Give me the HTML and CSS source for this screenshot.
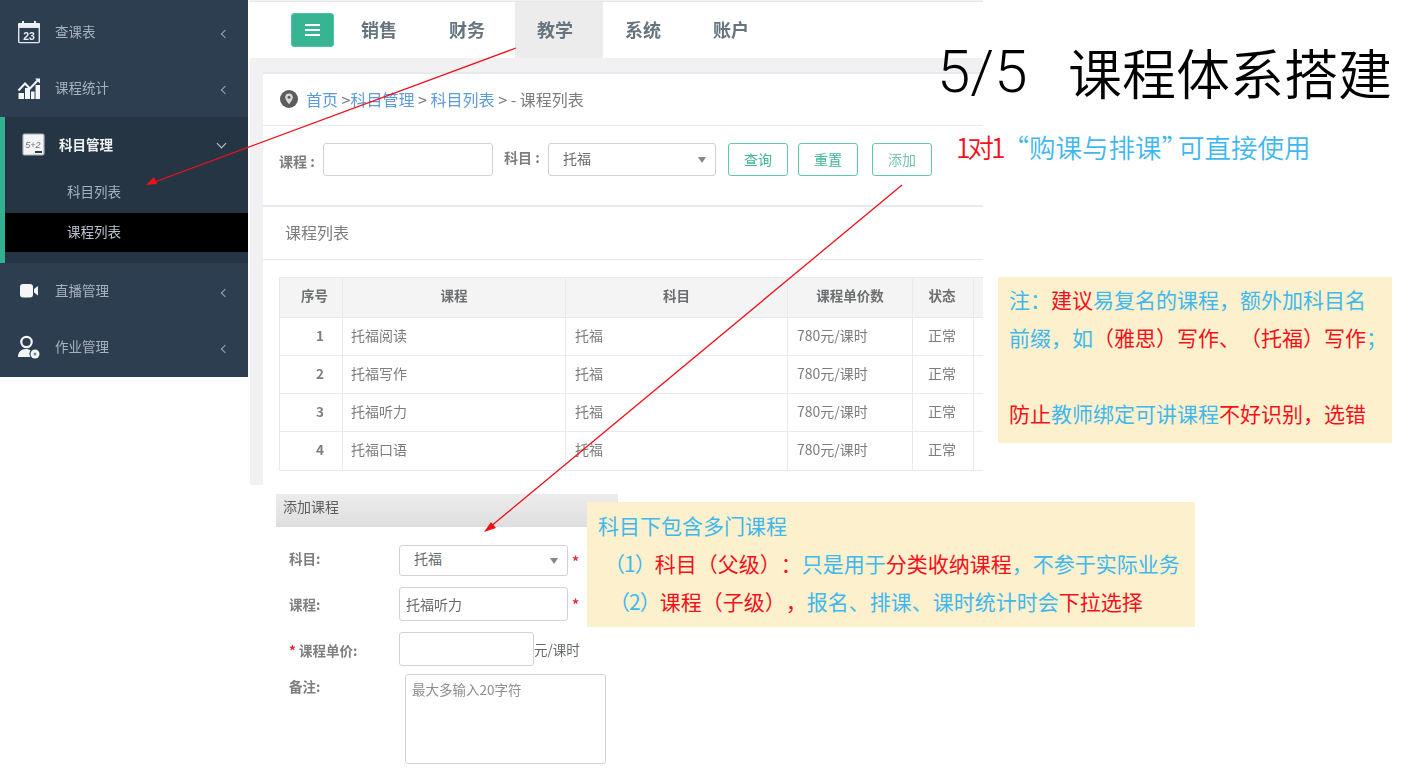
FILE: index.html
```html
<!DOCTYPE html>
<html lang="zh-CN">
<head>
<meta charset="utf-8">
<title>课程体系搭建</title>
<link rel="stylesheet" href="styles.css">
</head>
<body>
<div class="slide">

  <aside class="sidebar shot">
    <div class="side-item">
      <svg class="side-icon" width="24" height="24" viewBox="0 0 24 24"><path d="M2 3h3V1h2v2h10V1h2v2h3a1 1 0 0 1 1 1v4H1V4a1 1 0 0 1 1-1z" fill="#eef1f4"/><rect x="1.7" y="7" width="20.6" height="15.6" rx="1" fill="none" stroke="#e4e8ec" stroke-width="1.4"/><text x="12" y="19.5" text-anchor="middle" class="svg-num">23</text></svg>
      <span class="side-label">查课表</span><span class="chev"></span>
    </div>
    <div class="side-item">
      <svg class="side-icon" width="24" height="24" viewBox="0 0 24 24"><path d="M1.500 23v-6H7v6zM8 23V12h5v11zM14 23v-7.500h3.500V23zM18.500 23V9H23v14z" fill="#f4f6f8"/><path d="M1.500 14.500L8 7.500l5 5 7.500-8" fill="none" stroke="#f4f6f8" stroke-width="2"/><path d="M18 2.500h5v5z" fill="#f4f6f8"/></svg>
      <span class="side-label">课程统计</span><span class="chev"></span>
    </div>
    <div class="side-group">
      <div class="side-head">
        <svg class="board-icon" width="23" height="23" viewBox="0 0 23 23"><rect x="1" y="1" width="21" height="21" rx="1.500" fill="#f2f4f5" stroke="#aab2ba" stroke-width="1.200"/><text x="11" y="14.500" text-anchor="middle" class="svg-board">5+2</text><rect x="13" y="18" width="7" height="2" fill="#2c3a47"/></svg>
        <span class="side-label strong">科目管理</span><span class="chev-down"></span>
      </div>
      <div class="side-sub">科目列表</div>
      <div class="side-sub current">课程列表</div>
    </div>
    <div class="side-item">
      <svg class="side-icon" width="24" height="24" viewBox="0 0 24 24"><rect x="3" y="5" width="13" height="13.500" rx="3" fill="#f4f6f8"/><path d="M17 10l4-3v9.500l-4-3z" fill="#f4f6f8"/></svg>
      <span class="side-label">直播管理</span><span class="chev"></span>
    </div>
    <div class="side-item">
      <svg class="side-icon" width="24" height="24" viewBox="0 0 24 24"><circle cx="9.500" cy="7" r="5.200" fill="none" stroke="#f4f6f8" stroke-width="2.200"/><path d="M1 22c0-5 3-8 8-8 2 0 3.500.5 4.500 1.500-1.500 2-1.500 4.500 0 6.500z" fill="#f4f6f8"/><circle cx="18" cy="19" r="4.500" fill="#f4f6f8"/><circle cx="18" cy="19" r="1.500" fill="#7c8894"/></svg>
      <span class="side-label">作业管理</span><span class="chev"></span>
    </div>
  </aside>

  <section class="main shot">
    <nav class="topbar">
      <button class="menu-btn" type="button"><span></span><span></span><span></span></button>
      <a class="tab">销售</a><a class="tab">财务</a><a class="tab active">教学</a><a class="tab">系统</a><a class="tab">账户</a>
    </nav>
    <div class="panel">
      <div class="crumbs">
        <svg class="pin" width="18" height="18" viewBox="0 0 18 18"><circle cx="9" cy="9" r="9" fill="#5c5c5c"/><path d="M9 3.500a3.800 3.800 0 0 0-3.800 3.800c0 2.700 3.800 7 3.800 7s3.800-4.300 3.800-7A3.800 3.800 0 0 0 9 3.500z" fill="#d9d9d9"/><circle cx="9" cy="7.300" r="1.500" fill="#5c5c5c"/></svg>
        <span class="crumb-text"><a>首页</a> &gt;<a>科目管理</a> &gt; <a>科目列表</a> &gt; - 课程列表</span>
      </div>
      <div class="filter">
        <label class="f-label low">课程 :</label>
        <input class="field f-course" type="text">
        <label class="f-label high">科目 :</label>
        <div class="field select f-subject"><span>托福</span><i class="caret"></i></div>
        <button class="btn" type="button">查询</button>
        <button class="btn" type="button">重置</button>
        <button class="btn add" type="button">添加</button>
      </div>
      <h2 class="list-title">课程列表</h2>
      <div class="table-wrap">
        <table class="grid">
          <colgroup><col class="c1"><col class="c2"><col class="c3"><col class="c4"><col class="c5"><col class="c6"></colgroup>
          <thead><tr><th class="idx-h">序号</th><th>课程</th><th>科目</th><th>课程单价数</th><th class="stat-h">状态</th><th></th></tr></thead>
          <tbody>
            <tr><td class="idx">1</td><td>托福阅读</td><td>托福</td><td>780元/课时</td><td class="ctr">正常</td><td></td></tr>
            <tr><td class="idx">2</td><td>托福写作</td><td>托福</td><td>780元/课时</td><td class="ctr">正常</td><td></td></tr>
            <tr><td class="idx">3</td><td>托福听力</td><td>托福</td><td>780元/课时</td><td class="ctr">正常</td><td></td></tr>
            <tr class="last"><td class="idx">4</td><td>托福口语</td><td>托福</td><td>780元/课时</td><td class="ctr">正常</td><td></td></tr>
          </tbody>
        </table>
      </div>
    </div>
  </section>

  <section class="form shot">
    <div class="form-head">添加课程</div>
    <div class="form-row r1">
      <label class="form-label">科目:</label>
      <div class="field select f-wide"><span>托福</span><i class="caret"></i></div>
      <span class="req">*</span>
    </div>
    <div class="form-row r2">
      <label class="form-label">课程:</label>
      <input class="field f-wide text-in" type="text" value="托福听力">
      <span class="req">*</span>
    </div>
    <div class="form-row r3">
      <label class="form-label"><span class="req-l">*</span> 课程单价:</label>
      <input class="field f-price" type="text">
      <span class="unit">元/课时</span>
    </div>
    <div class="form-row r4">
      <label class="form-label">备注:</label>
      <textarea class="field memo" placeholder="最大多输入20字符"></textarea>
    </div>
  </section>

  <h1 class="title"><span class="title-num">5/5</span><span class="title-cn">课程体系搭建</span></h1>
  <p class="subtitle"><span class="red one">1对1</span> “购课与排课<span class="close-q">”</span>可直接使用</p>

  <div class="note note-a">
    <p>注：<span class="red">建议</span>易复名的课程，额外加科目名</p>
    <p>前缀，如<span class="red">（雅思）写作、（托福）写作</span>；</p>
    <p>&nbsp;</p>
    <p><span class="red">防止</span>教师绑定可讲课程<span class="red">不好识别，选错</span></p>
  </div>

  <div class="note note-b">
    <p>科目下包含多门课程</p>
    <p class="ind-1"><span class="num">（1）</span><span class="red">科目（父级）：</span>只是用于<span class="red">分类收纳课程</span>，不参于实际业务</p>
    <p class="ind-2"><span class="num">（2）</span><span class="red">课程（子级），</span>报名、排课、课时统计时会<span class="red">下拉选择</span></p>
  </div>

  <svg class="arrows" width="1412" height="779" viewBox="0 0 1412 779">
    <path d="M516 48L152 183" stroke="#f0101a" stroke-width="1.300" fill="none"/>
    <path d="M146 185L154 177L157 184Z" fill="#f0101a"/>
    <path d="M902 185L490 527" stroke="#f0101a" stroke-width="1.300" fill="none"/>
    <path d="M484 532L491 522L496 528Z" fill="#f0101a"/>
  </svg>
</div>
</body>
</html>
```

FILE: styles.css
```css
* { box-sizing: border-box; }
html, body { margin: 0; padding: 0; background: #fff; }
body { font-family: "Noto Sans CJK SC", "Liberation Sans", sans-serif; color: #676a6c; }
p, h1, h2 { margin: 0; font-weight: normal; }
a { color: inherit; }

.slide { position: relative; width: 1412px; height: 779px; overflow: hidden; background: #fff; }
.shot { filter: blur(0.35px); }

/* sidebar */
.sidebar { position: absolute; left: 0; top: 0; width: 248px; height: 377px; padding-top: 4px; background: #2c3e50; color: #a7b1c2; font-size: 13.5px; }
.side-item { position: relative; display: flex; align-items: center; height: 56px; padding-left: 17px; }
.side-icon { flex: none; margin-right: 14px; }
.side-label { flex: 1; margin-bottom: 2px; }
.side-label.strong { color: #eef1f4; font-weight: 700; }
.chev { width: 6px; height: 6px; margin: 3px 20px 0 0; border-left: 1.5px solid #9aa8b8; border-bottom: 1.5px solid #9aa8b8; transform: rotate(45deg); }
.chev-down { width: 7px; height: 7px; margin: 0 23px 3px 0; border-right: 1.5px solid #c5ccd4; border-bottom: 1.5px solid #c5ccd4; transform: rotate(45deg); }
.side-group { height: 146px; padding-bottom: 11px; margin-top: 1px; background: #263543; border-left: 5px solid #33b08f; }
.side-head { display: flex; align-items: center; height: 55px; padding-left: 17px; }
.board-icon { flex: none; margin-right: 14px; }
.side-sub { display: flex; align-items: center; height: 41px; padding: 0 0 3px 62px; }
.side-sub.current { height: 39px; background: #000; color: #b8c2d2; }
.svg-num { font: bold 10.5px "Liberation Sans", sans-serif; fill: #e9edf0; }
.svg-board { font: italic 9px "Liberation Sans", sans-serif; fill: #6b6f72; }

/* main screenshot */
.main { position: absolute; left: 250px; top: 0; width: 733px; height: 485px; padding-top: 1px; background: #f1f1f3; overflow: hidden; }
.topbar { display: flex; align-items: stretch; height: 57px; padding-left: 41px; background: #fff; border-top: 1px solid #e7e7e7; }
.menu-btn { display: flex; flex-direction: column; align-items: center; justify-content: center; gap: 3px; align-self: center; width: 43px; height: 34px; margin: 0 5px 0 0; padding: 0; border: 1px solid #52c4a6; border-radius: 3px; background: #37b492; }
.menu-btn span { width: 15px; height: 2px; background: #fff; }
.tab { width: 88px; display: flex; align-items: center; padding: 0 0 3px 22px; color: #66747f; font-size: 18px; font-weight: 700; }
.tab.active { background: #ececec; }

.panel { width: 720px; height: 414px; margin: 14px 0 0 13px; background: #fff; border-top: 2px solid #e7eaec; }
.crumbs { display: flex; align-items: center; gap: 8px; height: 52px; padding: 0 0 2px 17px; border-bottom: 1px solid #e7eaec; font-size: 16px; color: #7d7d7d; }
.crumbs .pin { flex: none; }
.crumb-text a { color: #5b9bd9; }
.filter { display: flex; align-items: center; height: 81px; padding: 0 0 12px 16px; border-bottom: 2px solid #e7eaec; font-size: 14px; }
.f-label { font-weight: 700; color: #7c7e80; white-space: nowrap; }
.f-label.low { position: relative; top: 1px; width: 44px; }
.f-label.high { position: relative; top: -3px; width: 44px; }
.field { display: block; border: 1px solid #d2d2d2; border-radius: 3px; background: #fff; font: inherit; color: #676a6c; outline: none; }
.f-course { width: 170px; height: 33px; margin-right: 11px; }
.select { position: relative; display: flex; align-items: center; padding-left: 14px; }
.caret { position: absolute; right: 9px; top: 50%; margin-top: -3px; border: 4.5px solid transparent; border-top: 6px solid #888; border-bottom: 0; }
.f-subject { width: 168px; height: 33px; margin-right: 12px; padding-bottom: 4px; }
.btn { width: 60px; height: 33px; margin-right: 10px; padding: 0 0 2px; border: 1.5px solid #5fc8ae; border-radius: 3px; background: #fff; color: #3fb697; font: inherit; }
.btn.add { margin-left: 4px; color: #74c4ae; }
.list-title { display: flex; align-items: center; height: 53px; padding: 0 0 2px 22px; border-bottom: 1px solid #e7eaec; font-size: 16px; color: #7d7d7d; }
.table-wrap { padding: 17px 0 0 16px; overflow: hidden; }
.grid { width: 760px; table-layout: fixed; border-collapse: collapse; font-size: 14px; color: #7d7d7d; }
.c1 { width: 63px; } .c2 { width: 223px; } .c3 { width: 222px; } .c4 { width: 125px; } .c5 { width: 61px; } .c6 { width: 66px; }
.grid th, .grid td { border: 1.5px solid #e9eaec; }
.grid th { height: 40px; background: #f4f4f4; font-weight: 600; color: #6c6e70; text-align: center; padding: 0 0 5px; font-size: 13.5px; }
.grid th.idx-h { padding-left: 7px; }
.grid th.stat-h { padding-right: 2px; }
.grid td { height: 38px; padding: 0 0 4px 8px; }
.grid td:nth-child(3), .grid td:nth-child(4) { padding-left: 9px; }
.grid tr.last td { height: 39px; }
.grid td.idx { padding: 0 0 4px 36px; font-weight: 600; font-size: 13.5px; }
.grid td.ctr { padding: 0 2px 4px 0; text-align: center; }

/* form screenshot */
.form { position: absolute; left: 276px; top: 494px; width: 342px; height: 280px; font-size: 14px; }
.form-head { display: flex; align-items: center; height: 33px; padding: 0 0 8px 7px; background: linear-gradient(#ececec, #dfdfdf); border-bottom: 1px solid #dcdcdc; color: #5e5e5e; }
.form-row { display: flex; align-items: center; padding-left: 13px; }
.form-label { flex: none; width: 110px; font-weight: 700; color: #7c7e80; font-size: 13.5px; }
.req-l { color: #e8283c; }
.req { margin-left: 4px; color: #e8283c; font-weight: 700; }
.f-wide { width: 169px; }
.r1 { margin-top: 18px; height: 31px; }
.r1 .select { height: 31px; padding-bottom: 5px; }
.r1 .form-label { margin-bottom: 6px; }
.r2 { margin-top: 11px; height: 34px; }
.r2 .field { height: 34px; }
.text-in { padding-left: 6px; }
.r3 { margin-top: 11px; height: 34px; }
.r3 .form-label { margin-top: 2px; }
.f-price { width: 135px; height: 34px; }
.unit { white-space: nowrap; font-size: 13.5px; }
.r4 { margin-top: 8px; align-items: flex-start; }
.r4 .form-label { margin-top: 2px; }
.memo { width: 201px; height: 90px; margin-left: 6px; padding: 4px 6px; resize: none; font-size: 13.5px; }
.memo::placeholder { color: #8f8f8f; opacity: 1; }

/* slide annotations */
.title { position: absolute; left: 937px; top: 33px; display: flex; align-items: center; height: 76px; color: #000; font-size: 54px; white-space: nowrap; font-weight: 350; }
.title-num { width: 131px; font-family: Roboto, sans-serif; font-size: 60px; font-weight: 300; }
.subtitle { position: absolute; left: 956px; top: 128px; color: #3fb8ee; font-size: 26.500px; font-weight: 350; line-height: 38px; white-space: nowrap; word-spacing: -6px; text-spacing-trim: space-all; }
.one { letter-spacing: -3px; }
.close-q { letter-spacing: -10px; }
.red { color: #f5101c; }
.note { position: absolute; padding-left: 11px; background: #fdf0cd; color: #3fb8ee; font-size: 21px; font-weight: 350; line-height: 38px; white-space: nowrap; text-spacing-trim: space-all; }
.note-a { left: 998px; top: 277px; width: 394px; height: 166px; padding-top: 3px; }
.note-b { left: 587px; top: 502px; width: 608px; height: 125px; padding-top: 4px; }
.num { letter-spacing: -1px; }
.ind-1 { padding-left: 6px; }
.ind-2 { padding-left: 11px; }
.arrows { position: absolute; left: 0; top: 0; pointer-events: none; }
```
